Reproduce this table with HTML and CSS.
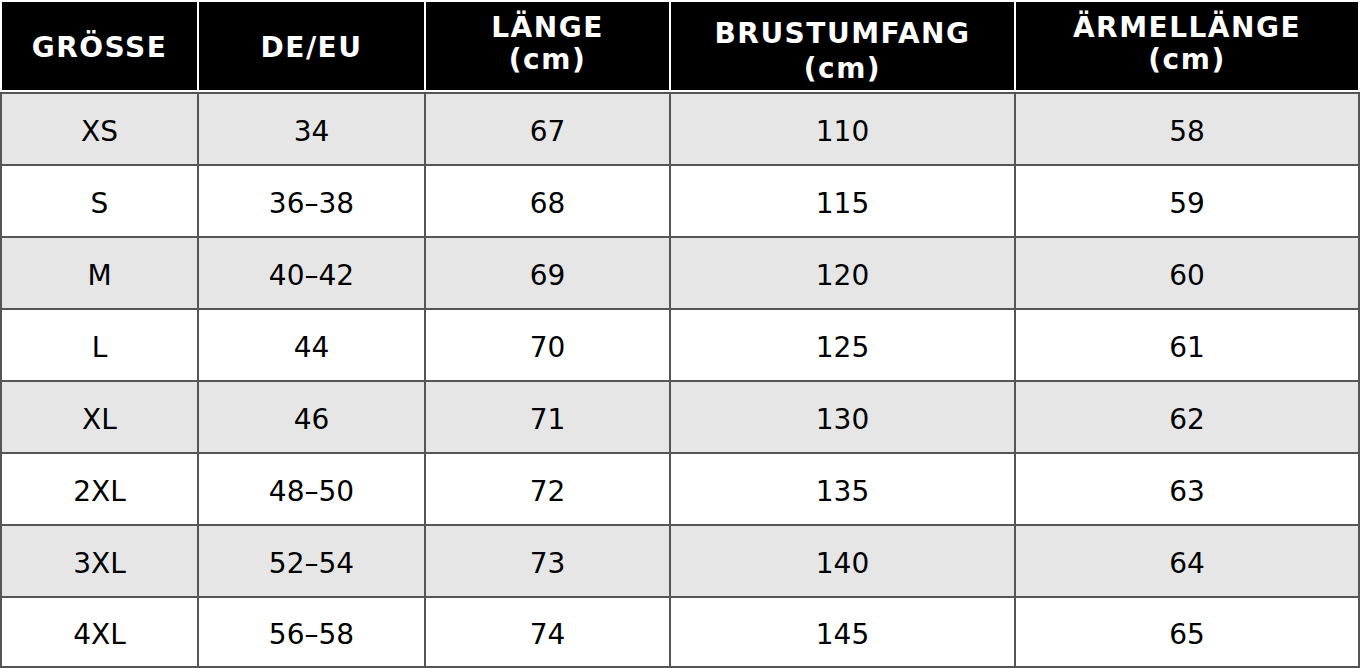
FILE: index.html
```html
<!DOCTYPE html>
<html lang="de">
<head>
<meta charset="utf-8">
<title>Größentabelle</title>
<link rel="stylesheet" href="styles.css">
</head>
<body>
<div class="chart">
  <div class="head">
    <div class="hcell one">GRÖSSE</div>
    <div class="hcell one">DE/EU</div>
    <div class="hcell two">LÄNGE<br>(cm)</div>
    <div class="hcell two low">BRUSTUMFANG<br>(cm)</div>
    <div class="hcell two">ÄRMELLÄNGE<br>(cm)</div>
  </div>
  <div class="body">
    <div class="row alt"><div class="cell">XS</div><div class="cell">34</div><div class="cell">67</div><div class="cell">110</div><div class="cell">58</div></div>
    <div class="row"><div class="cell">S</div><div class="cell">36–38</div><div class="cell">68</div><div class="cell">115</div><div class="cell">59</div></div>
    <div class="row alt"><div class="cell">M</div><div class="cell">40–42</div><div class="cell">69</div><div class="cell">120</div><div class="cell">60</div></div>
    <div class="row"><div class="cell">L</div><div class="cell">44</div><div class="cell">70</div><div class="cell">125</div><div class="cell">61</div></div>
    <div class="row alt"><div class="cell">XL</div><div class="cell">46</div><div class="cell">71</div><div class="cell">130</div><div class="cell">62</div></div>
    <div class="row"><div class="cell">2XL</div><div class="cell">48–50</div><div class="cell">72</div><div class="cell">135</div><div class="cell">63</div></div>
    <div class="row alt"><div class="cell">3XL</div><div class="cell">52–54</div><div class="cell">73</div><div class="cell">140</div><div class="cell">64</div></div>
    <div class="row last"><div class="cell">4XL</div><div class="cell">56–58</div><div class="cell">74</div><div class="cell">145</div><div class="cell">65</div></div>
  </div>
</div>
</body>
</html>
```
FILE: styles.css
```css
html, body {
  margin: 0;
  padding: 0;
  background: #ffffff;
}
body {
  font-family: "DejaVu Sans", Verdana, sans-serif;
}
.chart {
  width: 1360px;
  height: 668px;
  display: flex;
  flex-direction: column;
}
.head {
  display: grid;
  grid-template-columns: 195px 225px 243px 343px 342px;
  column-gap: 2px;
  padding: 2px;
  background: #ffffff;
}
.hcell {
  height: 88px;
  box-sizing: border-box;
  background: #000000;
  color: #ffffff;
  font-weight: bold;
  font-size: 28px;
  letter-spacing: 1.5px;
  line-height: 32px;
  display: flex;
  align-items: center;
  justify-content: center;
  text-align: center;
}
.hcell.one {
  padding-top: 4px;
}
.hcell.two {
  padding-bottom: 4px;
}
.hcell.two.low {
  padding-bottom: 0;
  padding-top: 10px;
  line-height: 35px;
}
.body {
  display: flex;
  flex-direction: column;
  gap: 2px;
  padding: 2px;
  background: #555555;
}
.row {
  display: grid;
  grid-template-columns: 195px 225px 243px 343px 342px;
  column-gap: 2px;
  height: 70px;
}
.row.last {
  height: 68px;
}
.cell {
  background: #ffffff;
  color: #000000;
  font-size: 28px;
  display: flex;
  align-items: center;
  justify-content: center;
  padding-top: 4px;
  box-sizing: border-box;
}
.row.alt .cell {
  background: #e6e6e6;
}
```
